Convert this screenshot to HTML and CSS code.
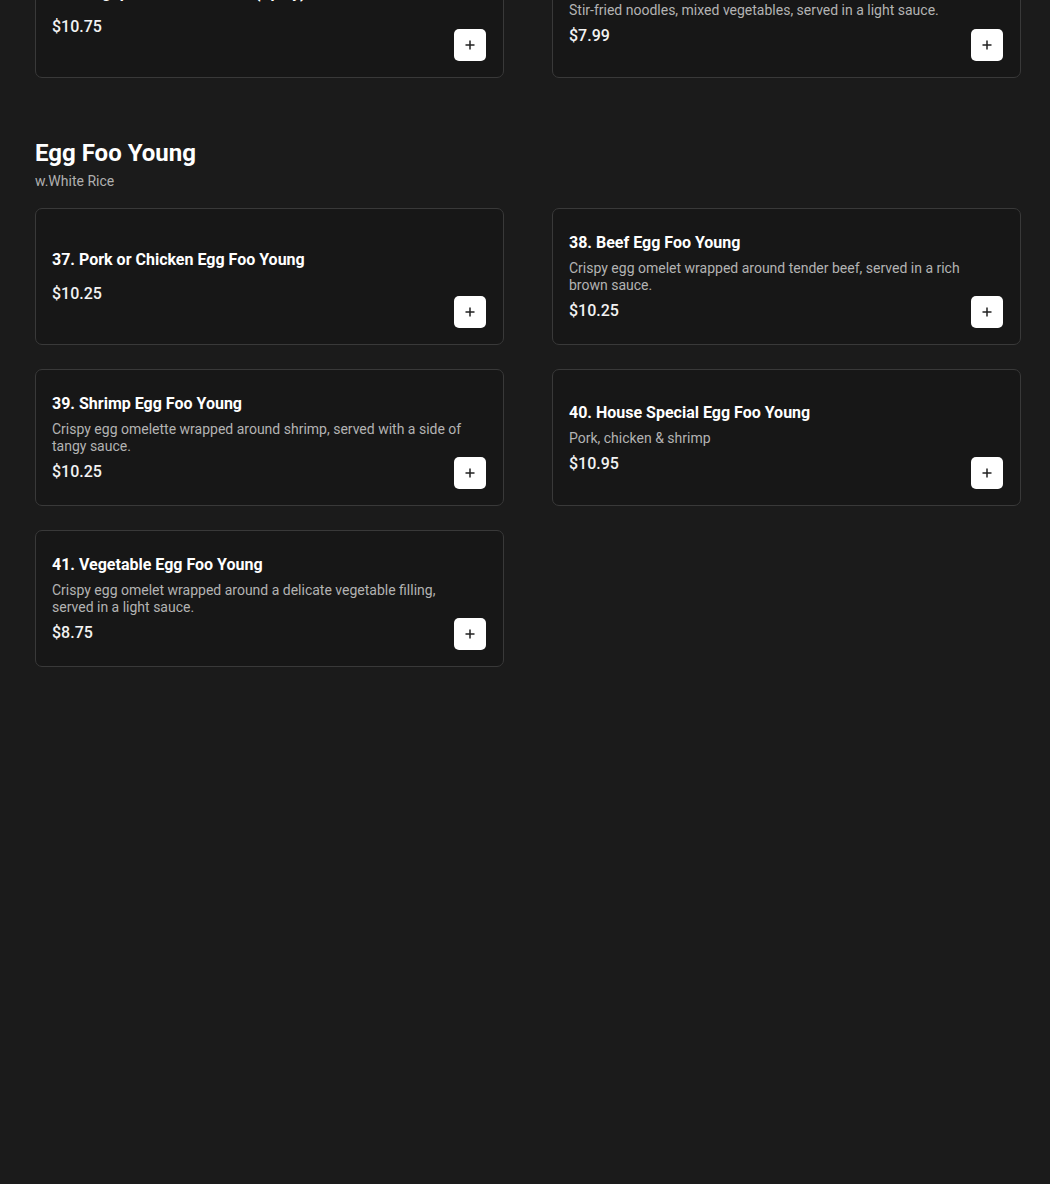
FILE: index.html
```html
<!DOCTYPE html>
<html lang="en">
<head>
<meta charset="utf-8">
<title>Menu</title>
<link rel="stylesheet" href="styles.css">
</head>
<body>
<main class="menu">
  <section class="category category-prev">
    <div class="grid">
      <div class="card">
        <div class="info">
          <div class="name">36. Singapore Rice Noodles (Spicy)</div>
          <div class="desc"></div>
          <div class="price">$10.75</div>
        </div>
        <button class="add" aria-label="Add"><svg viewBox="0 0 12 12" width="12" height="12"><path d="M6 1.5v9M1.5 6h9" stroke="#222" stroke-width="1.5" fill="none"/></svg></button>
      </div>
      <div class="card">
        <div class="info">
          <div class="name">35. Vegetable Lo Mein</div>
          <div class="desc">Stir-fried noodles, mixed vegetables, served in a light sauce.</div>
          <div class="price">$7.99</div>
        </div>
        <button class="add" aria-label="Add"><svg viewBox="0 0 12 12" width="12" height="12"><path d="M6 1.5v9M1.5 6h9" stroke="#222" stroke-width="1.5" fill="none"/></svg></button>
      </div>
    </div>
  </section>

  <section class="category">
    <header class="cat-head">
      <h2 class="cat-title">Egg Foo Young</h2>
      <p class="cat-sub">w.White Rice</p>
    </header>
    <div class="grid">
      <div class="card">
        <div class="info">
          <div class="name">37. Pork or Chicken Egg Foo Young</div>
          <div class="desc"></div>
          <div class="price">$10.25</div>
        </div>
        <button class="add" aria-label="Add"><svg viewBox="0 0 12 12" width="12" height="12"><path d="M6 1.5v9M1.5 6h9" stroke="#222" stroke-width="1.5" fill="none"/></svg></button>
      </div>
      <div class="card">
        <div class="info">
          <div class="name">38. Beef Egg Foo Young</div>
          <div class="desc">Crispy egg omelet wrapped around tender beef, served in a rich brown sauce.</div>
          <div class="price">$10.25</div>
        </div>
        <button class="add" aria-label="Add"><svg viewBox="0 0 12 12" width="12" height="12"><path d="M6 1.5v9M1.5 6h9" stroke="#222" stroke-width="1.5" fill="none"/></svg></button>
      </div>
      <div class="card">
        <div class="info">
          <div class="name">39. Shrimp Egg Foo Young</div>
          <div class="desc">Crispy egg omelette wrapped around shrimp, served with a side of tangy sauce.</div>
          <div class="price">$10.25</div>
        </div>
        <button class="add" aria-label="Add"><svg viewBox="0 0 12 12" width="12" height="12"><path d="M6 1.5v9M1.5 6h9" stroke="#222" stroke-width="1.5" fill="none"/></svg></button>
      </div>
      <div class="card">
        <div class="info">
          <div class="name">40. House Special Egg Foo Young</div>
          <div class="desc">Pork, chicken &amp; shrimp</div>
          <div class="price">$10.95</div>
        </div>
        <button class="add" aria-label="Add"><svg viewBox="0 0 12 12" width="12" height="12"><path d="M6 1.5v9M1.5 6h9" stroke="#222" stroke-width="1.5" fill="none"/></svg></button>
      </div>
      <div class="card">
        <div class="info">
          <div class="name">41. Vegetable Egg Foo Young</div>
          <div class="desc">Crispy egg omelet wrapped around a delicate vegetable filling, served in a light sauce.</div>
          <div class="price">$8.75</div>
        </div>
        <button class="add" aria-label="Add"><svg viewBox="0 0 12 12" width="12" height="12"><path d="M6 1.5v9M1.5 6h9" stroke="#222" stroke-width="1.5" fill="none"/></svg></button>
      </div>
    </div>
  </section>
</main>
</body>
</html>
```
FILE: styles.css
```css
html, body {
  margin: 0;
  padding: 0;
  background: #1b1b1b;
}
body {
  font-family: Roboto, "Liberation Sans", Arial, sans-serif;
  color: #fff;
  height: 1184px;
  overflow: hidden;
}
.menu {
  padding: 0 29px 0 35px;
  margin-top: -59px;
  display: flex;
  flex-direction: column;
  gap: 59px;
}
.grid {
  display: grid;
  grid-template-columns: 469px 469px;
  column-gap: 48px;
  row-gap: 24px;
}
.cat-head {
  margin-bottom: 17px;
}
.cat-title {
  margin: 0;
  font-size: 24px;
  line-height: 32px;
  font-weight: 700;
  color: #fff;
}
.cat-sub {
  margin: 2px 0 0;
  font-size: 14px;
  line-height: 20px;
  color: #b0b0b0;
}
.card {
  box-sizing: border-box;
  min-height: 137px;
  padding: 16px 17px 16px 16px;
  background: #171717;
  border: 1px solid #393939;
  border-radius: 7px;
  display: grid;
  grid-template-columns: 1fr;
  grid-template-rows: 1fr;
}
.info {
  grid-area: 1 / 1;
  align-self: center;
  max-width: 420px;
  display: flex;
  flex-direction: column;
  gap: 6px;
  padding-top: 1px;
}
.name {
  font-size: 16px;
  line-height: 22px;
  font-weight: 700;
  color: #fff;
}
.desc {
  font-size: 14px;
  line-height: 17px;
  color: #b3b3b3;
}
.price {
  font-size: 16px;
  line-height: 22px;
  font-weight: 500;
  color: #f2f2f2;
}
.add {
  grid-area: 1 / 1;
  align-self: end;
  justify-self: end;
  width: 32px;
  height: 32px;
  padding: 0;
  border: none;
  border-radius: 5px;
  background: #fff;
  display: flex;
  align-items: center;
  justify-content: center;
  cursor: pointer;
}
.add svg {
  display: block;
}
```
